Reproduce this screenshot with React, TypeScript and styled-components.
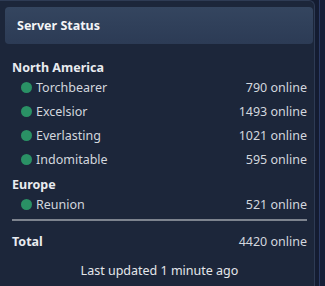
import styled, { createGlobalStyle } from 'styled-components';

const GlobalStyle = createGlobalStyle`
  html, body {
    margin: 0;
    padding: 0;
    background: #141c31;
  }
  body {
    font-family: 'Noto Sans', 'Open Sans', sans-serif;
  }
`;

type Server = { name: string; online: number };
type Region = { name: string; servers: Server[] };

const regions: Region[] = [
  {
    name: 'North America',
    servers: [
      { name: 'Torchbearer', online: 790 },
      { name: 'Excelsior', online: 1493 },
      { name: 'Everlasting', online: 1021 },
      { name: 'Indomitable', online: 595 },
    ],
  },
  {
    name: 'Europe',
    servers: [{ name: 'Reunion', online: 521 }],
  },
];

const Page = styled.div`
  display: flex;
  height: 286px;
  overflow: hidden;
`;

const Panel = styled.section`
  box-sizing: border-box;
  width: 315px;
  height: 100%;
  flex-shrink: 0;
  background: #1c263a;
  border-top: 1px solid #2e3b54;
  border-right: 1px solid #2e3b54;
  border-top-right-radius: 6px;
  padding: 6px 1px 0 5px;
`;

const Gutter = styled.div`
  flex: 1;
  margin-left: 4px;
  border-left: 1px solid #2a3962;
  background: #151e36;
`;

const Header = styled.header`
  height: 37px;
  display: flex;
  align-items: center;
  padding: 0 12px;
  background: linear-gradient(#34455f, #2c3b55);
  border-radius: 4px;
  color: #f4f5f7;
  font-size: 12.5px;
  font-weight: 700;
`;

const Body = styled.div`
  padding: 15px 6px 0 7px;
`;

const RegionGroup = styled.div`
  & + & {
    margin-top: 7px;
  }
`;

const RegionName = styled.div`
  height: 18px;
  line-height: 18px;
  font-size: 12.5px;
  font-weight: 700;
  color: #e9ebef;
`;

const ServerList = styled.ul`
  list-style: none;
  margin: 0;
  padding: 0;
  display: flex;
  flex-direction: column;
  gap: 4px;
`;

const Row = styled.li<{ $indent?: boolean }>`
  height: 20px;
  display: flex;
  align-items: center;
  justify-content: space-between;
  padding-left: ${(p) => (p.$indent ? '9px' : '0')};
  font-size: 12.5px;
  color: #d3d7de;
`;

const ServerName = styled.span`
  display: flex;
  align-items: center;
  gap: 4px;
`;

const Dot = styled.span`
  width: 11px;
  height: 11px;
  border-radius: 50%;
  background: #2a9165;
`;

const Divider = styled.hr`
  margin: 5px 0 0;
  border: none;
  height: 2px;
  background: #7d838e;
`;

const TotalRow = styled.div`
  margin-top: 10px;
  height: 20px;
  display: flex;
  align-items: center;
  justify-content: space-between;
  font-size: 12.5px;
  color: #d3d7de;
`;

const TotalLabel = styled.span`
  font-weight: 700;
  color: #e9ebef;
`;

const Updated = styled.div`
  margin-top: 10px;
  height: 20px;
  line-height: 20px;
  text-align: center;
  font-size: 12.5px;
  color: #e4e6ea;
`;

export default function App() {
  const total = regions.reduce(
    (sum, r) => sum + r.servers.reduce((s, sv) => s + sv.online, 0),
    0,
  );

  return (
    <>
      <GlobalStyle />
      <Page>
        <Panel>
          <Header>Server Status</Header>
          <Body>
            {regions.map((region) => (
              <RegionGroup key={region.name}>
                <RegionName>{region.name}</RegionName>
                <ServerList>
                  {region.servers.map((server) => (
                    <Row key={server.name} $indent>
                      <ServerName>
                        <Dot />
                        {server.name}
                      </ServerName>
                      <span>{server.online} online</span>
                    </Row>
                  ))}
                </ServerList>
              </RegionGroup>
            ))}
            <Divider />
            <TotalRow>
              <TotalLabel>Total</TotalLabel>
              <span>{total} online</span>
            </TotalRow>
            <Updated>Last updated 1 minute ago</Updated>
          </Body>
        </Panel>
        <Gutter />
      </Page>
    </>
  );
}
